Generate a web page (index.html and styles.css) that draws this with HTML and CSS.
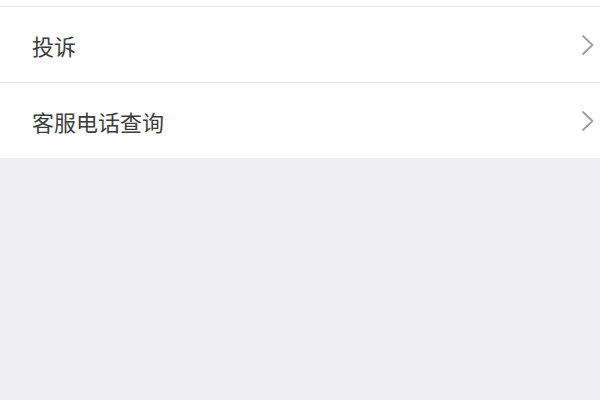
FILE: index.html
```html
<!DOCTYPE html>
<html lang="zh-CN">

<head>
  <meta charset="UTF-8">
  <meta name="viewport" content="width=device-width, initial-scale=1.0">
  <title>服务</title>
  <link rel="stylesheet" href="styles.css">
</head>

<body>
  <ul class="menu-list">
    <li class="menu-item menu-item-top"></li>
    <li class="menu-item">
      <span class="menu-label">投诉</span>
      <svg class="menu-arrow" viewBox="0 0 13 22" width="13" height="22">
        <path d="M2 2 L11.5 11 L2 20" fill="none" stroke="#9e9e9e" stroke-width="1.8" stroke-linecap="round" stroke-linejoin="round"/>
      </svg>
    </li>
    <li class="menu-item">
      <span class="menu-label">客服电话查询</span>
      <svg class="menu-arrow" viewBox="0 0 13 22" width="13" height="22">
        <path d="M2 2 L11.5 11 L2 20" fill="none" stroke="#9e9e9e" stroke-width="1.8" stroke-linecap="round" stroke-linejoin="round"/>
      </svg>
    </li>
  </ul>
</body>

</html>
```

FILE: styles.css
```css
html,
body {
  margin: 0;
  padding: 0;
  height: 100%;
}

body {
  background-color: #efeef3;
  font-family: "Noto Sans CJK SC", "Noto Sans", sans-serif;
}

.menu-list {
  list-style: none;
  margin: 0;
  padding: 0;
  background-color: #fff;
}

.menu-item {
  display: flex;
  align-items: center;
  justify-content: space-between;
  height: 75px;
  padding: 0 6px 0 32px;
  border-top: 1px solid #e8e8e8;
}

.menu-item-top {
  height: 6px;
  border-top: none;
}

.menu-label {
  font-size: 22px;
  color: #3c3c3c;
  line-height: 1;
}

.menu-arrow {
  display: block;
}
```
